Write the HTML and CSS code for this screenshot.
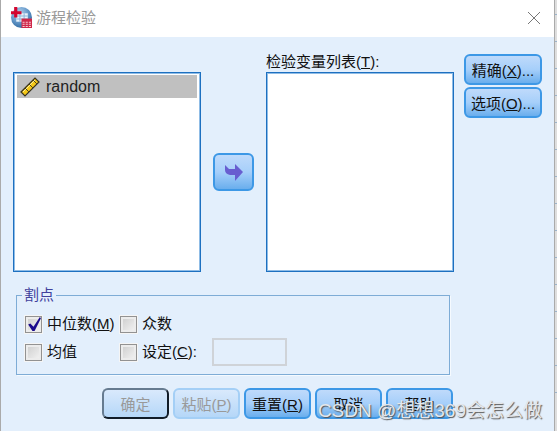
FILE: index.html
```html
<!DOCTYPE html>
<html lang="zh-CN">
<head>
<meta charset="utf-8">
<title>游程检验</title>
<link rel="stylesheet" href="styles.css">
</head>
<body>
<main class="dialog">
  <header class="titlebar">
    <svg class="app-icon" viewBox="0 0 20 20" aria-hidden="true">
      <defs><radialGradient id="globe" cx=".4" cy=".3" r=".75"><stop offset="0" stop-color="#b7d5ee"/><stop offset=".5" stop-color="#6d9fce"/><stop offset="1" stop-color="#2a669f"/></radialGradient></defs>
      <circle cx="10" cy="10" r="10" fill="url(#globe)"/>
      <path d="M5 6h11v8H5z" fill="#e9f3fb"/>
      <path d="M5 8.500h11M5 11.500h11M8.500 6v8M12.500 6v8" stroke="#8fb6da" fill="none"/>
      <path d="M3 0h3v4h4v3H6v3H3V7H0V4h3z" fill="#d3062f"/>
      <path d="M10 11h10v9H10z" fill="#cf2749"/>
      <path d="M11 14h2v1h-2zm3 0h2v1h-2zm3 0h2v1h-2zm-6 2h2v1h-2zm3 0h2v1h-2zm3 0h2v1h-2zm-6 2h2v1h-2zm3 0h2v1h-2zm3 0h2v1h-2z" fill="#f7c9d2"/>
    </svg>
    <h1 class="title">游程检验</h1>
    <button class="close" type="button" aria-label="关闭">
      <svg viewBox="0 0 12 12" aria-hidden="true"><path d="M0 0l12 12M12 0L0 12" stroke="#777" fill="none"/></svg>
    </button>
  </header>
  <form class="content">
    <div class="transfer">
      <div class="column">
        <ul class="list">
          <li class="item">
            <svg class="ruler" viewBox="0 0 20 20" aria-hidden="true">
              <path d="M1 15L15 1l4 4L5 19z" fill="#f5c816" stroke="#39331f" stroke-width="1.200"/>
              <path d="M3 15L15 3" stroke="#fff29a" fill="none"/>
              <path d="M5 11l4 4M9 7l4 4M13 3l4 4" stroke="#4d4420" fill="none"/>
            </svg>
            random
          </li>
        </ul>
      </div>
      <button class="button move" type="button" aria-label="移动">
        <svg viewBox="0 0 18 17" aria-hidden="true"><path d="M0 1l4 4h6V0l8 8-8 9v-6H5Q0 10 0 6z" fill="#685ed0"/></svg>
      </button>
      <div class="column">
        <span class="list-label" id="test-label">检验变量列表(<u>T</u>):</span>
        <ul class="list" aria-labelledby="test-label"></ul>
      </div>
      <div class="side">
        <button class="button" type="button"><span>精确(<u>X</u>)...</span></button>
        <button class="button" type="button"><span>选项(<u>O</u>)...</span></button>
      </div>
    </div>
    <div class="lower">
      <fieldset class="group">
        <legend>割点</legend>
        <div class="options">
          <label class="option"><span class="tick"><input type="checkbox" checked><svg viewBox="0 0 16 16" aria-hidden="true"><path d="M3 8l2-1 3 3 6-9 1 1-6 12H7z" fill="#1b0b8c"/></svg></span><span>中位数(<u>M</u>)</span></label>
          <label class="option"><span class="tick"><input type="checkbox"></span><span>众数</span></label>
          <label class="option"><span class="tick"><input type="checkbox"></span><span>均值</span></label>
          <div class="custom">
            <label class="option"><span class="tick"><input type="checkbox"></span><span>设定(<u>C</u>):</span></label>
            <input class="value" type="text" aria-label="设定" disabled>
          </div>
        </div>
      </fieldset>
      <div class="actions">
        <button class="button default" type="button" disabled><span>确定</span></button>
        <button class="button" type="button" disabled><span>粘贴(<u>P</u>)</span></button>
        <button class="button" type="button"><span>重置(<u>R</u>)</span></button>
        <button class="button" type="button"><span>取消</span></button>
        <button class="button" type="button"><span>帮助</span></button>
      </div>
    </div>
  </form>
  <div class="watermark">CSDN @想想369会怎么做</div>
</main>
</body>
</html>
```
FILE: styles.css
```css
* { box-sizing: border-box; }

body {
  margin: 0;
  min-height: 100vh;
  padding: 0 3px 0 1px;
  background: repeating-linear-gradient(#dedede 0 26px, #9cb4cb 26px 27px) 0 -12px;
  font: 15px/20px "Liberation Sans", "Noto Sans CJK SC", sans-serif;
  color: #111;
}

.dialog {
  position: relative;
  min-height: 100vh;
  background: #e3effc;
  overflow: hidden;
  box-shadow: 0 0 0 1px #aaa;
}

.titlebar {
  display: flex;
  align-items: center;
  height: 37px;
  padding: 0 10px 2px 10px;
  background: #fff;
}

.app-icon { width: 21px; height: 21px; }

.title {
  flex: 1;
  margin: 0 0 0 4px;
  font-size: 15px;
  font-weight: 400;
  color: #999;
}

.close {
  display: flex;
  padding: 4px;
  border: 0;
  background: none;
}

.close svg { width: 12px; height: 12px; overflow: visible; }

.content { padding: 15px 12px 0; }

.transfer {
  display: grid;
  grid-template-columns: 1fr 45px 1fr 78px;
  column-gap: 10px;
}

.column {
  display: flex;
  flex-direction: column;
  justify-content: flex-end;
  height: 220px;
}

.list-label { white-space: nowrap; }

.list {
  height: 200px;
  margin: 0;
  padding: 2px;
  list-style: none;
  background: #fff;
  border: 1px solid #1d70c0;
  outline: 1px solid #8fbce6;
  outline-offset: -2px;
}

.item {
  display: flex;
  align-items: center;
  gap: 6px;
  height: 23px;
  margin: 0 1px;
  padding: 0 3px;
  background: #c0c0c0;
  color: #222;
  font-size: 16px;
}

.ruler { width: 20px; height: 20px; }

.button {
  display: flex;
  align-items: center;
  justify-content: center;
  height: 31px;
  padding: 2px 0 0;
  border: 2px solid #3d98e6;
  border-radius: 6px;
  background: linear-gradient(#bfdafb, #a6cffa 50%, #6aaeed);
  font: inherit;
  color: #111;
  white-space: nowrap;
}

.button:disabled {
  border-color: #a4cff6;
  background: linear-gradient(#d9e9fc, #b5d7f8);
  color: #999;
}

.button.default:disabled {
  border-color: #667b90 #111c28 #111c28 #667b90;
}

.move {
  align-self: end;
  justify-self: center;
  width: 41px;
  height: 38px;
  margin-bottom: 81px;
  padding: 0;
}

.move svg { width: 18px; height: 17px; }

.side {
  display: flex;
  flex-direction: column;
  gap: 2px;
  padding-top: 2px;
}

.lower {
  margin: 13px 92px 0 3px;
}

.group {
  min-width: 0;
  margin: 0;
  padding: 5px 7px 8px 8px;
  border: 1px solid #7eacd6;
  box-shadow: 1px 1px #f5faff;
}

.group legend {
  margin-left: -3px;
  padding: 0 2px;
  color: #41419c;
}

.options {
  display: grid;
  grid-template-columns: 95px 1fr;
  grid-template-rows: 28px 28px;
  align-items: center;
}

.option {
  display: flex;
  align-items: center;
  gap: 5px;
  white-space: nowrap;
}

.tick {
  position: relative;
  display: flex;
}

.tick input {
  appearance: none;
  width: 17px;
  height: 17px;
  margin: 0;
  border: 1px solid #929292;
  outline: 1px solid #f5f5f5;
  background: linear-gradient(135deg, #ccc, #f5f5f5);
  box-shadow: inset 0 0 0 2px #ececec;
}

.tick svg {
  position: absolute;
  inset: 0;
  pointer-events: none;
}

.custom {
  display: flex;
  align-items: center;
  gap: 15px;
}

.value {
  width: 75px;
  height: 28px;
  border: 2px solid #cfd3d8;
  background: #e3effc;
  font: inherit;
}

.actions {
  display: grid;
  grid-template-columns: repeat(5, 67px);
  justify-content: end;
  gap: 4px;
  margin: 13px -3px 0 0;
}

.watermark {
  position: absolute;
  right: 12px;
  bottom: 8px;
  font-size: 19px;
  line-height: 24px;
  color: #e4e7eb;
  text-shadow: 1px 1px 1px #555;
  pointer-events: none;
}
```
